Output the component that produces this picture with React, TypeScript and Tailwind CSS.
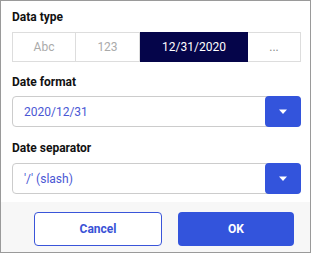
import React from "react";

const font = { fontFamily: "Roboto, 'Liberation Sans', sans-serif" };

function Caret() {
  return (
    <svg width="10" height="6" viewBox="0 0 10 6">
      <path d="M1 0.5 L9 0.5 L5 5 Z" fill="#ffffff" />
    </svg>
  );
}

function Select({ value }: { value: string }) {
  return (
    <div className="flex h-[31px] w-[289px] items-stretch rounded-[4px] border border-[#cccccc] bg-white">
      <div className="flex flex-1 items-center pl-[11px] text-[12px] text-[#4a57d4]">{value}</div>
      <div className="-my-px -mr-px flex w-[36px] items-center justify-center rounded-[4px] bg-[#3354dc]">
        <Caret />
      </div>
    </div>
  );
}

export default function App() {
  return (
    <div style={font} className="flex h-[253px] w-[311px] flex-col border border-[#9a9a9a] bg-white">
      <div className="flex flex-col px-[11px] pt-[9px]">
        <div className="h-[14px] text-[12px] font-bold leading-[14px] text-[#111111]">Data type</div>
        <div className="mt-[8px] flex h-[30px] w-[289px] border border-[#dddddd] text-[12px]">
          <div className="flex w-[63px] items-center justify-center border-r border-[#dddddd] text-[#aaaaaa]">Abc</div>
          <div className="flex w-[64px] items-center justify-center border-r border-[#dddddd] text-[#aaaaaa]">123</div>
          <div className="-my-px flex w-[108px] items-center justify-center bg-[#05054a] text-white">12/31/2020</div>
          <div className="flex flex-1 items-center justify-center text-[#888888]">...</div>
        </div>
        <div className="mt-[13px] h-[14px] text-[12px] font-bold leading-[14px] text-[#111111]">Date format</div>
        <div className="mt-[7px]">
          <Select value="2020/12/31" />
        </div>
        <div className="mt-[14px] h-[14px] text-[12px] font-bold leading-[14px] text-[#111111]">Date separator</div>
        <div className="mt-[8px]">
          <Select value="'/' (slash)" />
        </div>
      </div>
      <div className="mt-[8px] flex flex-1 items-start bg-[#f7f7f7] pl-[33px] pt-[10px]">
        <button className="flex h-[34px] w-[128px] items-center justify-center rounded-[4px] border border-[#3a55d9] bg-white text-[12px] font-bold text-[#3a52d6]">
          Cancel
        </button>
        <button className="ml-[16px] flex h-[34px] w-[116px] items-center justify-center rounded-[4px] bg-[#3354dc] text-[12px] font-bold text-white">
          OK
        </button>
      </div>
    </div>
  );
}
